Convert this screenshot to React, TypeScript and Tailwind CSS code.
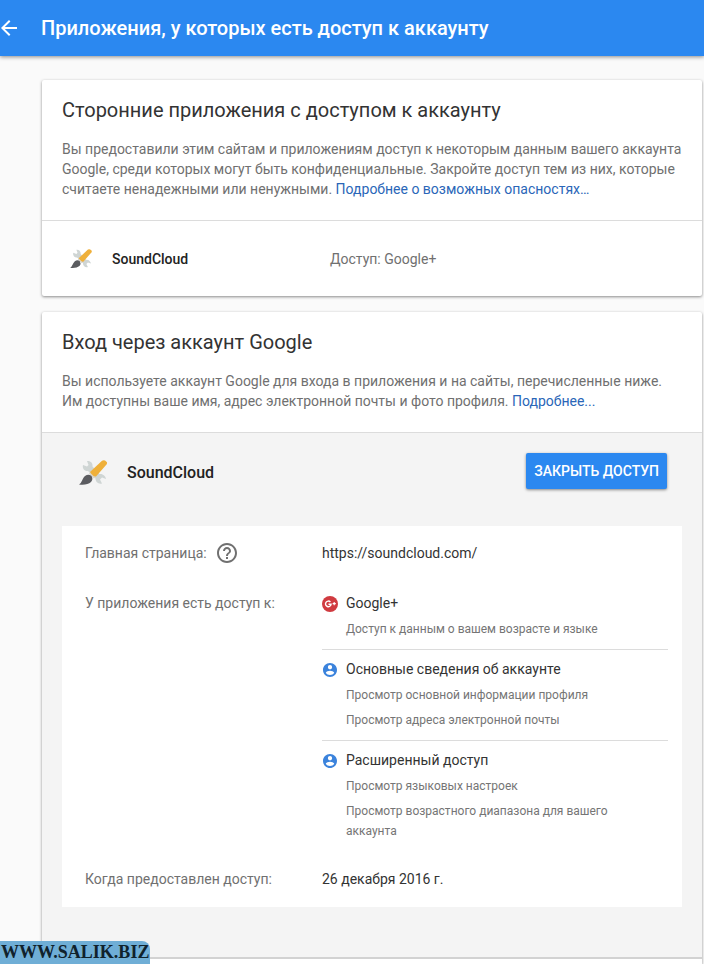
import type { ReactNode } from 'react'

interface Permission {
  title: string
  icon: 'plus' | 'person'
  details: string[]
}

const permissions: Permission[] = [
  { title: 'Google+', icon: 'plus', details: ['Доступ к данным о вашем возрасте и языке'] },
  {
    title: 'Основные сведения об аккаунте',
    icon: 'person',
    details: ['Просмотр основной информации профиля', 'Просмотр адреса электронной почты'],
  },
  {
    title: 'Расширенный доступ',
    icon: 'person',
    details: ['Просмотр языковых настроек', 'Просмотр возрастного диапазона для вашего аккаунта'],
  },
]

function BackIcon() {
  return (
    <svg viewBox="0 0 24 24" className="w-6 h-6" fill="currentColor" aria-hidden="true">
      <path d="M20 11H7.83l5.59-5.59L12 4l-8 8 8 8 1.41-1.41L7.83 13H20v-2z" />
    </svg>
  )
}

function HelpIcon() {
  return (
    <svg viewBox="0 0 24 24" className="w-6 h-6" fill="currentColor" aria-hidden="true">
      <path d="M11 18h2v-2h-2v2zm1-16C6.48 2 2 6.48 2 12s4.48 10 10 10 10-4.48 10-10S17.52 2 12 2zm0 18c-4.41 0-8-3.59-8-8s3.59-8 8-8 8 3.59 8 8-3.59 8-8 8zm0-14c-2.21 0-4 1.79-4 4h2c0-1.1.9-2 2-2s2 .9 2 2c0 2-3 1.75-3 5h2c0-2.25 3-2.5 3-5 0-2.21-1.79-4-4-4z" />
    </svg>
  )
}

function PlusIcon() {
  return (
    <svg viewBox="0 0 16 16" className="w-4 h-4" aria-hidden="true">
      <circle cx="8" cy="8" r="8" fill="#d03b40" />
      <path d="M8.4 6A2.8 2.8 0 1 0 9.1 8.2H6.5" fill="none" stroke="#fff" strokeWidth="1.4" />
      <path d="M12.2 6v3.2M10.6 7.6h3.2" stroke="#fff" strokeWidth="1.1" />
    </svg>
  )
}

function PersonIcon() {
  return (
    <svg viewBox="2 2 20 20" className="w-3.5 h-3.5" fill="#3b83dc" aria-hidden="true">
      <path d="M12 2C6.48 2 2 6.48 2 12s4.48 10 10 10 10-4.48 10-10S17.52 2 12 2zm0 3c1.66 0 3 1.34 3 3s-1.34 3-3 3-3-1.34-3-3 1.34-3 3-3zm0 14.2c-2.5 0-4.71-1.28-6-3.22.03-1.99 4-3.08 6-3.08 1.99 0 5.97 1.09 6 3.08-1.29 1.94-3.5 3.22-6 3.22z" />
    </svg>
  )
}

// wrench crossed with a paint brush
function ToolsIcon({ className }: { className: string }) {
  return (
    <svg viewBox="0 0 28 26" className={className} aria-hidden="true">
      <path
        d="M4 5L8 6.5 9.5 5 8 1C11.5 0.5 14 3 13.5 6.500L20.500 14C24 13.500 26.500 16 27 19L23 17.500 21 19.500 23 23.500C19.500 24.500 16.500 22 16.500 18.500L9 11C5.500 11.500 3 8.500 4 5Z"
        fill="#cfd5d4"
      />
      <path d="M11 12L23 0.800Q24.500 -0.200 26 0.600L28 2.200Q28.300 3.500 27.500 4.600L17 16.500Q12.500 17 11 12Z" fill="#efb03a" />
      <path d="M10.5 13L15.500 18" stroke="#d9d4c8" strokeWidth="1.5" />
      <path d="M0 24.500C3 23 3 18.500 6 16Q9.500 13.500 12.500 16 14.500 19 12 22 8 25.500 0 24.500Z" fill="#5b5c60" />
    </svg>
  )
}

interface CardHeaderProps {
  title: string
  link: string
  children: ReactNode
}

function CardHeader({ title, link, children }: CardHeaderProps) {
  return (
    <div className="px-5 pt-4 pb-[21px] border-b border-[#dcdcdc]">
      <h2 className="text-xl leading-7 text-[#333]">{title}</h2>
      <p className="mt-[15px] text-sm leading-5 text-[#707070]">
        {children}{' '}
        <a href="#details" className="text-[#2a66b8]">
          {link}
        </a>
      </p>
    </div>
  )
}

function PermissionItem({ permission }: { permission: Permission }) {
  return (
    <li className="flex gap-2 pt-[9px] pb-2.5 border-b border-[#dcdcdc] first:pt-0 last:pb-0 last:border-b-0">
      <span className="flex w-4 h-5 mt-px shrink-0 items-center justify-center">
        {permission.icon === 'plus' ? <PlusIcon /> : <PersonIcon />}
      </span>
      <div>
        <h4 className="text-[#333]">{permission.title}</h4>
        <ul className="mt-1.5 space-y-[5px] pr-5 text-xs leading-5 text-[#757575]">
          {permission.details.map((detail) => (
            <li key={detail}>{detail}</li>
          ))}
        </ul>
      </div>
    </li>
  )
}

export default function App() {
  return (
    <div className="relative flex min-h-screen flex-col bg-[#fafafa] font-['Roboto',sans-serif]">
      <header className="flex h-14 items-center bg-[#2b88f0] text-white shadow-[0_1px_4px_rgba(0,0,0,0.45)]">
        <button type="button" aria-label="Назад" className="-ml-[3px] mr-5">
          <BackIcon />
        </button>
        <h1 className="text-xl font-medium">Приложения, у которых есть доступ к аккаунту</h1>
      </header>

      <main className="flex flex-1 flex-col gap-4 pt-6 pl-[42px] pr-0.5">
        <section className="rounded-xs bg-white shadow-[0_1px_3px_rgba(0,0,0,0.45)]">
          <CardHeader title="Сторонние приложения с доступом к аккаунту" link="Подробнее о возможных опасностях…">
            Вы предоставили этим сайтам и приложениям доступ к некоторым данным вашего аккаунта Google, среди
            которых могут быть конфиденциальные. Закройте доступ тем из них, которые считаете ненадежными или
            ненужными.
          </CardHeader>
          <div className="flex h-[75px] items-center pl-7 text-sm">
            <ToolsIcon className="w-[22px] h-5" />
            <span className="ml-5 w-[218px] font-medium text-[#222]">SoundCloud</span>
            <span className="text-[#707070]">Доступ: Google+</span>
          </div>
        </section>

        <section className="flex flex-1 flex-col rounded-t-xs bg-white shadow-[0_1px_3px_rgba(0,0,0,0.45)]">
          <CardHeader title="Вход через аккаунт Google" link="Подробнее...">
            Вы используете аккаунт Google для входа в приложения и на сайты, перечисленные ниже. Им доступны ваше
            имя, адрес электронной почты и фото профиля.
          </CardHeader>

          <div className="border-b-2 border-[#d2d2d2] bg-[#f4f4f4] px-5 pt-5 pb-[50px]">
            <div className="flex items-start pr-[15px] pl-[17px]">
              <div className="flex h-10 items-center">
                <ToolsIcon className="w-7 h-[26px]" />
                <h3 className="ml-5 font-medium text-[#222]">SoundCloud</h3>
              </div>
              <button
                type="button"
                className="ml-auto h-9 rounded-xs bg-[#2b88f0] px-2 text-sm font-medium text-white shadow-[0_1px_3px_rgba(0,0,0,0.45)]"
              >
                ЗАКРЫТЬ ДОСТУП
              </button>
            </div>

            <dl className="mt-[33px] grid grid-cols-[237px_1fr] bg-white pt-[17px] pr-3.5 pb-[18px] pl-[23px] text-sm leading-5 text-[#333]">
              <dt className="flex h-5 items-center gap-2 text-[#707070]">
                Главная страница:
                <button type="button" aria-label="Справка">
                  <HelpIcon />
                </button>
              </dt>
              <dd>https://soundcloud.com/</dd>

              <dt className="mt-[30px] text-[#707070]">У приложения есть доступ к:</dt>
              <dd className="mt-[30px]">
                <ul>
                  {permissions.map((permission) => (
                    <PermissionItem key={permission.title} permission={permission} />
                  ))}
                </ul>
              </dd>

              <dt className="mt-7 text-[#707070]">Когда предоставлен доступ:</dt>
              <dd className="mt-7">26 декабря 2016 г.</dd>
            </dl>
          </div>
        </section>
      </main>

      <div className="absolute bottom-0 left-0 rounded-tr-lg bg-[#6faed6] px-px font-['Liberation_Serif',serif] text-lg leading-[23px] font-bold text-[#10222c]">
        WWW.SALIK.BIZ
      </div>
    </div>
  )
}
